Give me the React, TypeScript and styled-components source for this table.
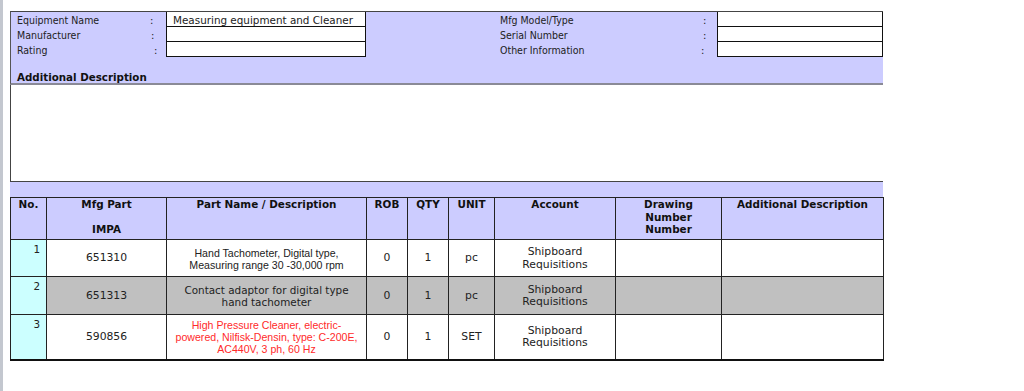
import React from "react";
import styled, { createGlobalStyle } from "styled-components";

const GlobalStyle = createGlobalStyle`
  html, body {
    margin: 0;
    padding: 0;
    background: #ffffff;
  }
  body {
    font-family: "DejaVu Sans", Verdana, sans-serif;
    font-size: 10px;
    color: #222;
  }
`;

const LAVENDER = "#ccccff";

const Page = styled.div`
  min-height: 391px;
  box-sizing: border-box;
  border-left: 3px solid #c3c7cf;
  padding: 11px 0 0 7px;
`;

const Sheet = styled.div`
  width: 873px;
`;

const InfoGrid = styled.div`
  display: grid;
  grid-template-columns: 134px 21px 200px 128px 203px 20px 166px;
  grid-auto-rows: 15px;
  background: ${LAVENDER};
  border-top: 1px solid #444;
  border-left: 1px solid #555;
`;

const Label = styled.div`
  font-family: "DejaVu Sans Condensed", "DejaVu Sans", sans-serif;
  font-size: 10.5px;
  padding: 1px 0 0 6px;
  line-height: 15px;
  white-space: nowrap;
`;

const Colon = styled.div<{ $shift?: number }>`
  padding: 1px 0 0 ${(p) => p.$shift ?? 5}px;
  line-height: 15px;
`;

const ValueBox = styled.div`
  background: #fff;
  box-sizing: border-box;
  border: 1px solid #111;
  border-top: none;
  padding: 1px 0 0 6px;
  font-size: 10.4px;
  line-height: 14px;
  white-space: nowrap;
  overflow: hidden;
`;

const Gap = styled.div`
  grid-row: span 3;
`;

const DescBand = styled.div`
  height: 26px;
  background: ${LAVENDER};
  border-bottom: 2px solid #8a8a96;
  border-left: 1px solid #555;
  display: flex;
  align-items: flex-end;
  padding-left: 6px;
  font-size: 10.3px;
  font-weight: bold;
  color: #111;
  line-height: 12px;
`;

const DescBody = styled.div`
  height: 96px;
  background: #fff;
  border-left: 1px solid #444;
  border-bottom: 1px solid #444;
`;

const SpacerBand = styled.div`
  height: 15px;
  background: ${LAVENDER};
`;

const Parts = styled.table`
  width: 873px;
  border-collapse: collapse;
  table-layout: fixed;
  border-bottom: 2px solid #111;
`;

const Th = styled.th`
  background: ${LAVENDER};
  border: 1px solid #222;
  vertical-align: top;
  text-align: center;
  font-size: 10.4px;
  font-weight: bold;
  color: #111;
  line-height: 12.5px;
  padding: 0 2px;
`;

const HeadRow = styled.tr`
  height: 42px;
`;

const BodyRow = styled.tr<{ $shade?: boolean; $h: number }>`
  height: ${(p) => p.$h}px;
  background: ${(p) => (p.$shade ? "#c0c0c0" : "#ffffff")};
`;

const Td = styled.td`
  border: 1px solid #222;
  text-align: center;
  vertical-align: middle;
  font-size: 10.8px;
  line-height: 12.5px;
  padding: 1px 3px 0;
`;

const NoCell = styled(Td)`
  background: #ccffff;
  text-align: right;
  vertical-align: top;
  font-size: 10.4px;
  padding: 3px 6px 0 0;
`;

const DescCell = styled(Td)<{ $red?: boolean; $arial?: boolean }>`
  font-family: ${(p) =>
    p.$arial ? '"Liberation Sans", Arial, sans-serif' : '"DejaVu Sans", Verdana, sans-serif'};
  font-size: ${(p) => (p.$arial ? "10.6px" : "10.4px")};
  line-height: 12px;
  padding: ${(p) => (p.$arial ? "1px 3px 0" : "1px 12px 0")};
  color: ${(p) => (p.$red ? "#ff2a2a" : "#222")};
`;

type Part = {
  no: number;
  impa: string;
  desc: string;
  rob: number;
  qty: number;
  unit: string;
  shade?: boolean;
  red?: boolean;
  arial?: boolean;
  h: number;
};

const parts: Part[] = [
  {
    no: 1,
    impa: "651310",
    desc: "Hand Tachometer, Digital type, Measuring range 30 -30,000 rpm",
    rob: 0,
    qty: 1,
    unit: "pc",
    arial: true,
    h: 37,
  },
  {
    no: 2,
    impa: "651313",
    desc: "Contact adaptor for digital type hand tachometer",
    rob: 0,
    qty: 1,
    unit: "pc",
    shade: true,
    h: 38,
  },
  {
    no: 3,
    impa: "590856",
    desc: "High Pressure Cleaner, electric-powered, Nilfisk-Densin, type: C-200E, AC440V, 3 ph, 60 Hz",
    rob: 0,
    qty: 1,
    unit: "SET",
    red: true,
    arial: true,
    h: 45,
  },
];

const widths = [36, 120, 200, 41, 41, 46, 121, 106, 162];

export default function App() {
  return (
    <Page>
      <GlobalStyle />
      <Sheet>
        <InfoGrid>
          <Label>Equipment Name</Label>
          <Colon>:</Colon>
          <ValueBox>Measuring equipment and Cleaner</ValueBox>
          <Gap />
          <Label>Mfg Model/Type</Label>
          <Colon $shift={6}>:</Colon>
          <ValueBox />

          <Label>Manufacturer</Label>
          <Colon $shift={6}>:</Colon>
          <ValueBox />
          <Label>Serial Number</Label>
          <Colon $shift={6}>:</Colon>
          <ValueBox />

          <Label>Rating</Label>
          <Colon $shift={9}>:</Colon>
          <ValueBox />
          <Label>Other Information</Label>
          <Colon $shift={4}>:</Colon>
          <ValueBox />
        </InfoGrid>

        <DescBand>Additional Description</DescBand>
        <DescBody />
        <SpacerBand />

        <Parts>
          <colgroup>
            {widths.map((w, i) => (
              <col key={i} style={{ width: w }} />
            ))}
          </colgroup>
          <thead>
            <HeadRow>
              <Th>No.</Th>
              <Th>
                Mfg Part
                <br />
                <br />
                IMPA
              </Th>
              <Th>Part Name / Description</Th>
              <Th>ROB</Th>
              <Th>QTY</Th>
              <Th>UNIT</Th>
              <Th>Account</Th>
              <Th>
                Drawing
                <br />
                Number
                <br />
                Number
              </Th>
              <Th>Additional Description</Th>
            </HeadRow>
          </thead>
          <tbody>
            {parts.map((p) => (
              <BodyRow key={p.no} $shade={p.shade} $h={p.h}>
                <NoCell>{p.no}</NoCell>
                <Td>{p.impa}</Td>
                <DescCell $red={p.red} $arial={p.arial}>
                  {p.desc}
                </DescCell>
                <Td>{p.rob}</Td>
                <Td>{p.qty}</Td>
                <Td>{p.unit}</Td>
                <Td>Shipboard Requisitions</Td>
                <Td />
                <Td />
              </BodyRow>
            ))}
          </tbody>
        </Parts>
      </Sheet>
    </Page>
  );
}
